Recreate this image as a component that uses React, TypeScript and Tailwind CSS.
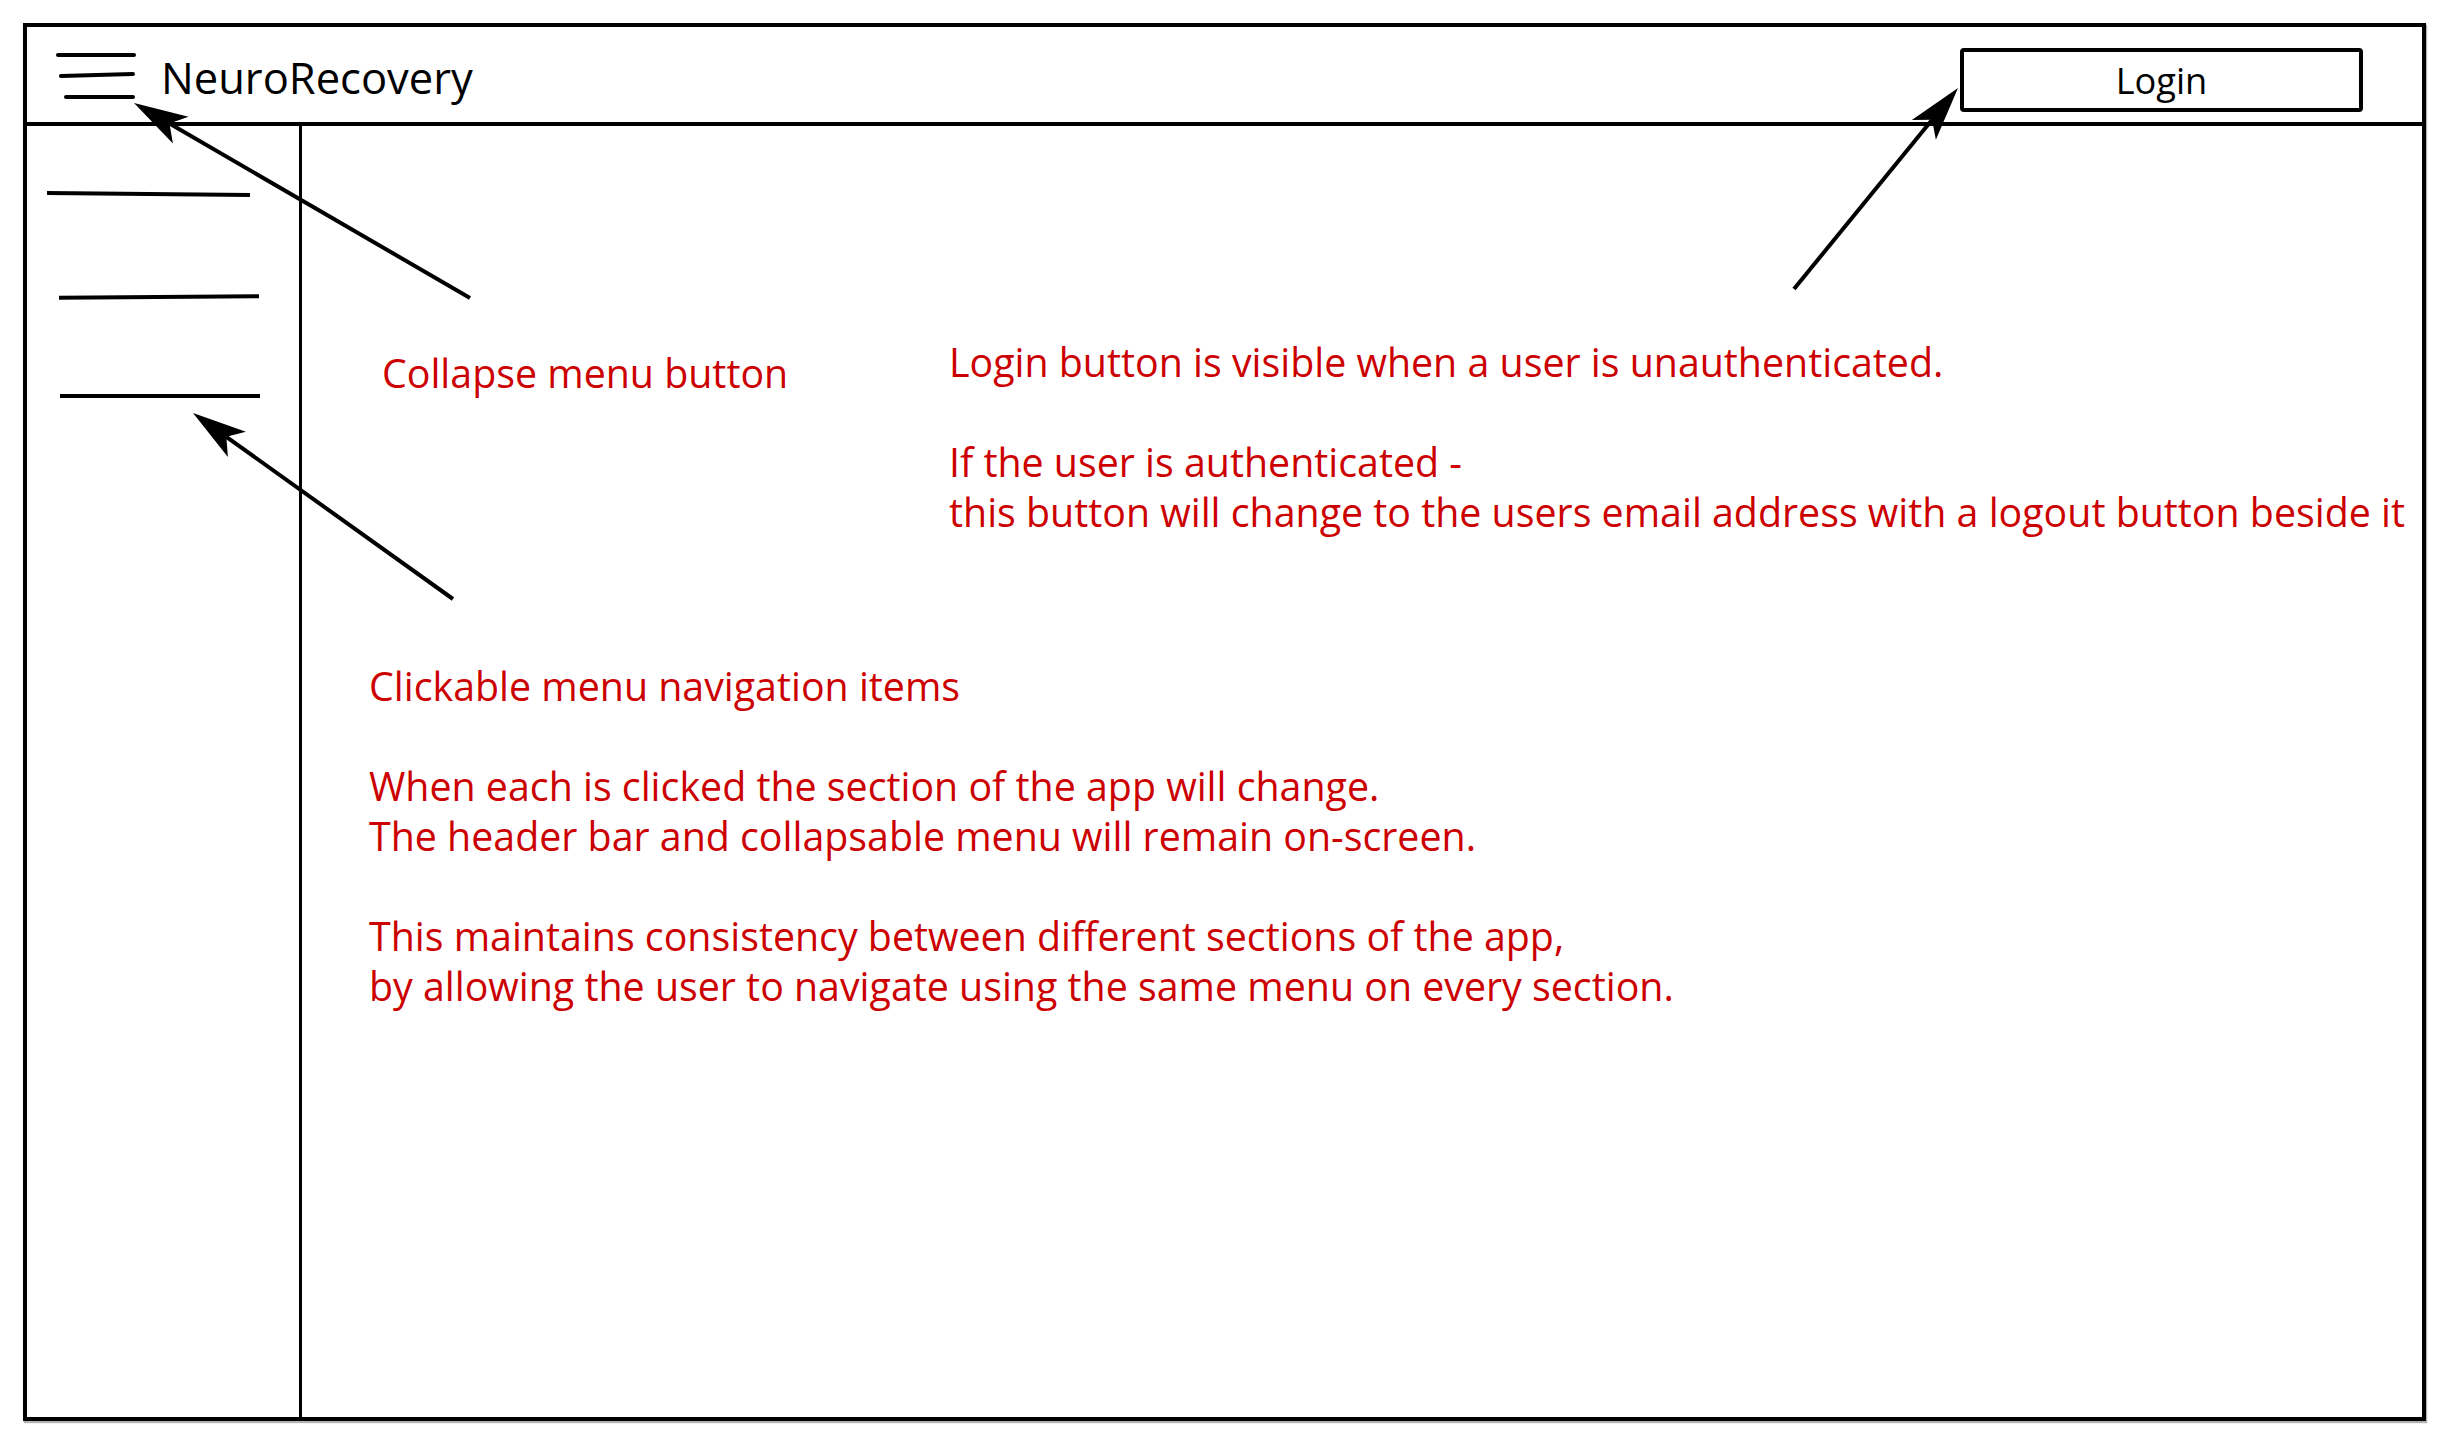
import React from "react";

type Pt = [number, number];

// annotation arrows drawn over the wireframe, tail -> tip
const arrows: { tail: Pt; tip: Pt }[] = [
  { tail: [470, 298], tip: [134, 103] },
  { tail: [453, 599], tip: [193, 413] },
  { tail: [1794, 289], tip: [1958, 88] },
];

function Arrow({ tail, tip }: { tail: Pt; tip: Pt }) {
  const dx = tail[0] - tip[0];
  const dy = tail[1] - tip[1];
  const len = Math.hypot(dx, dy);
  const ux = dx / len;
  const uy = dy / len;
  const nx = -uy;
  const ny = ux;
  const headLen = 54;
  const half = 15.5;
  const notch = 41;
  const a: Pt = [tip[0] + ux * headLen - nx * half, tip[1] + uy * headLen - ny * half];
  const b: Pt = [tip[0] + ux * headLen + nx * half, tip[1] + uy * headLen + ny * half];
  const n: Pt = [tip[0] + ux * notch, tip[1] + uy * notch];
  return (
    <g>
      <line x1={tail[0]} y1={tail[1]} x2={n[0]} y2={n[1]} stroke="black" strokeWidth={4} />
      <polygon points={`${tip[0]},${tip[1]} ${a[0]},${a[1]} ${n[0]},${n[1]} ${b[0]},${b[1]}`} fill="black" />
    </g>
  );
}

function Hamburger() {
  return (
    <svg width="82" height="52" viewBox="0 0 82 52" className="mt-[23px] ml-[28px] shrink-0">
      <g stroke="black" strokeWidth="4" strokeLinecap="round">
        <line x1="3" y1="5" x2="79" y2="5" />
        <line x1="6" y1="26" x2="78" y2="24" />
        <line x1="11" y1="47" x2="78" y2="47" />
      </g>
    </svg>
  );
}

export default function App() {
  return (
    <div className="relative w-[2440px] h-[1440px] bg-white pl-[23px] pt-[23px] font-['Open_Sans',sans-serif]">
      <div className="w-[2403px] h-[1398px] border-4 border-black flex flex-col shadow-[1px_2px_1px_rgba(0,0,0,0.3)]">
        {/* Header */}
        <header className="h-[99px] border-b-4 border-black flex items-start shrink-0">
          <Hamburger />
          <span className="ml-[24px] mt-[29px] text-[43.5px] leading-none text-black">NeuroRecovery</span>
          <button className="ml-auto mr-[59px] mt-[21px] w-[403px] h-[64px] border-4 border-black rounded-[4px] flex items-center justify-center text-[36.2px] leading-none text-black">
            Login
          </button>
        </header>

        <div className="flex flex-1">
          {/* Sidebar */}
          <aside className="w-[275px] border-r-[3px] border-black shrink-0 flex flex-col">
            <div className="ml-[20px] mt-[66px] w-[203px] h-[4px] bg-black rotate-[0.5deg]" />
            <div className="ml-[32px] mt-[99px] w-[200px] h-[4px] bg-black rotate-[-0.5deg]" />
            <div className="ml-[33px] mt-[95px] w-[200px] h-[4px] bg-black" />
          </aside>

          {/* Main area with notes */}
          <main className="flex-1 text-[#cc0000] text-[39.35px] leading-[50px]">
            <div className="flex items-start pt-[211px]">
              <p className="ml-[80px] mt-[11px] w-[567px] shrink-0">Collapse menu button</p>
              <div className="flex flex-col gap-[50px]">
                <p>Login button is visible when a user is unauthenticated.</p>
                <p>
                  If the user is authenticated -
                  <br />
                  this button will change to the users email address with a logout button beside it
                </p>
              </div>
            </div>
            <div className="ml-[67px] mt-[124px] flex flex-col gap-[50px]">
              <p>Clickable menu navigation items</p>
              <p>
                When each is clicked the section of the app will change.
                <br />
                The header bar and collapsable menu will remain on-screen.
              </p>
              <p>
                This maintains consistency between different sections of the app,
                <br />
                by allowing the user to navigate using the same menu on every section.
              </p>
            </div>
          </main>
        </div>
      </div>

      <svg className="absolute inset-0 pointer-events-none" width="2440" height="1440" viewBox="0 0 2440 1440">
        {arrows.map((a, i) => (
          <Arrow key={i} tail={a.tail} tip={a.tip} />
        ))}
      </svg>
    </div>
  );
}
